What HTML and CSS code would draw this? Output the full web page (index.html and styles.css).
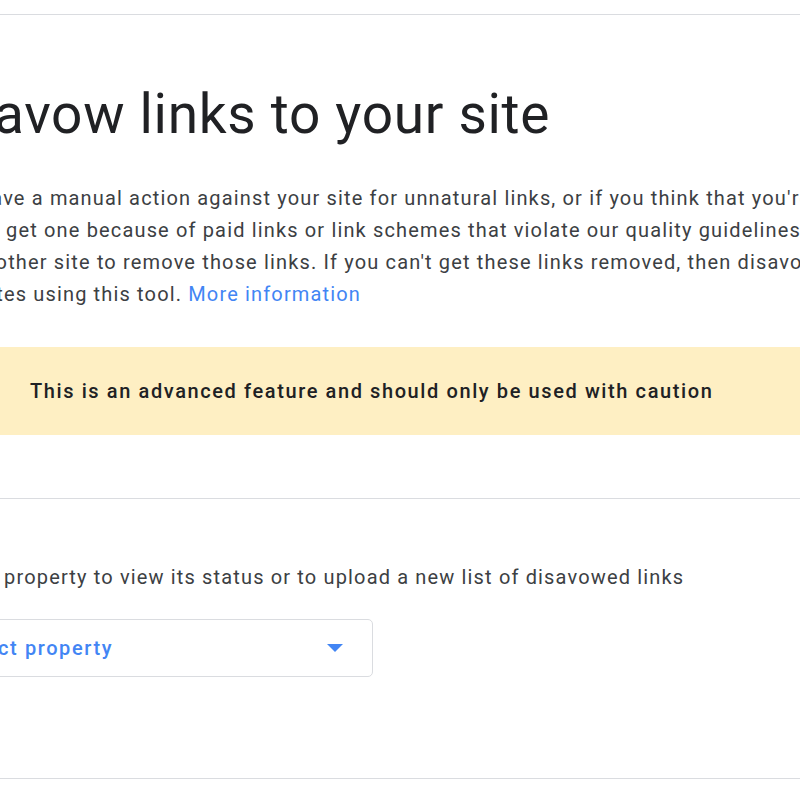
FILE: index.html
```html
<!DOCTYPE html>
<html lang="en">
<head>
<meta charset="utf-8">
<title>Disavow links</title>
<link rel="stylesheet" href="styles.css">
</head>
<body>
<div class="page">
  <hr class="rule rule-top">
  <section class="intro">
    <h1 class="title">Disavow links to your site</h1>
    <p class="lead">If you have a manual action against your site for unnatural links, or if you think that you're<br>about to get one because of paid links or link schemes that violate our quality guidelines,<br>ask the other site to remove those links. If you can't get these links removed, then disavow<br>those sites using this tool. <a class="link" href="#">More information</a></p>
  </section>
  <div class="warning"><span class="warning-text">This is an advanced feature and should only be used with caution</span></div>
  <hr class="rule rule-mid">
  <section class="select">
    <p class="select-label">Select a property to view its status or to upload a new list of disavowed links</p>
    <div class="dropdown">
      <span class="dropdown-text">Select property</span>
      <svg class="dropdown-arrow" width="16" height="8" viewBox="0 0 16 8"><path d="M0 0h16L8 8z" fill="#4285f4"/></svg>
    </div>
  </section>
  <hr class="rule rule-bottom">
</div>
</body>
</html>
```

FILE: styles.css
```css
html, body {
  margin: 0;
  padding: 0;
  background: #ffffff;
  overflow: hidden;
}
body {
  width: 800px;
  height: 800px;
  font-family: Roboto, "Liberation Sans", sans-serif;
  color: #3c4043;
}
.page {
  display: flex;
  flex-direction: column;
  padding-top: 14px;
}
.rule {
  border: 0;
  height: 1px;
  margin: 0;
  background: #dadce0;
  width: 100%;
}
.intro {
  margin-left: -83px;
  white-space: nowrap;
}
.title {
  margin: 65px 0 0 -3px;
  font-family: Roboto, "Liberation Sans", sans-serif;
  font-weight: 400;
  font-size: 55px;
  letter-spacing: 0.7px;
  line-height: 68px;
  color: #202124;
}
.lead {
  margin: 34px 0 0 0;
  font-size: 20px;
  letter-spacing: 1.15px;
  line-height: 32px;
  color: #3c4043;
}
.link {
  color: #4285f4;
  text-decoration: none;
}
.warning {
  margin-top: 37px;
  height: 88px;
  background: #feefc3;
  display: flex;
  align-items: center;
  padding-left: 30px;
}
.warning-text {
  font-size: 20px;
  font-weight: 500;
  letter-spacing: 1.6px;
  color: #202124;
}
.rule-mid {
  margin-top: 63px;
}
.select {
  margin-left: -82px;
  white-space: nowrap;
}
.select-label {
  margin: 62px 0 0 0;
  font-size: 20px;
  letter-spacing: 1.15px;
  line-height: 32px;
}
.dropdown {
  margin-top: 26px;
  width: 455px;
  height: 58px;
  border: 1px solid #dadce0;
  border-radius: 5px;
  display: flex;
  align-items: center;
  justify-content: space-between;
  padding: 0 29px 0 34px;
  box-sizing: border-box;
}
.dropdown-text {
  font-size: 20px;
  font-weight: 500;
  letter-spacing: 1.6px;
  color: #4285f4;
}
.rule-bottom {
  margin-top: 101px;
}
```
